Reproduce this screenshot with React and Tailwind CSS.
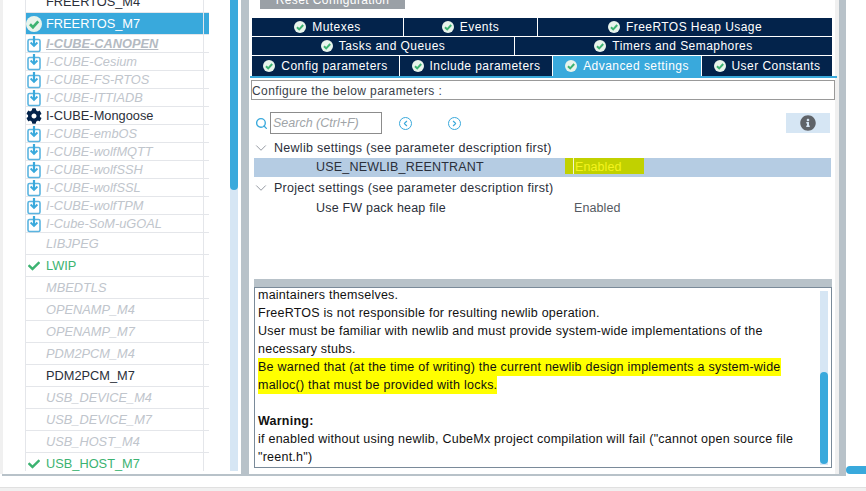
import React from 'react';
import { FaCheck, FaCog, FaInfoCircle } from 'react-icons/fa';
import { ChevronDown, ChevronLeft, ChevronRight, Search } from 'lucide-react';

const PACKS = [
  { name: 'FREERTOS_M4', h: 22, kind: 'plain' },
  { name: 'FREERTOS_M7', h: 22, kind: 'selected', icon: 'circle' },
  { name: 'I-CUBE-CANOPEN', h: 18, kind: 'strong', icon: 'download' },
  { name: 'I-CUBE-Cesium', h: 18, kind: 'off', icon: 'download' },
  { name: 'I-CUBE-FS-RTOS', h: 18, kind: 'off', icon: 'download' },
  { name: 'I-CUBE-ITTIADB', h: 18, kind: 'off', icon: 'download' },
  { name: 'I-CUBE-Mongoose', h: 18, kind: 'plain', icon: 'gear' },
  { name: 'I-CUBE-embOS', h: 18, kind: 'off', icon: 'download' },
  { name: 'I-CUBE-wolfMQTT', h: 18, kind: 'off', icon: 'download' },
  { name: 'I-CUBE-wolfSSH', h: 18, kind: 'off', icon: 'download' },
  { name: 'I-CUBE-wolfSSL', h: 18, kind: 'off', icon: 'download' },
  { name: 'I-CUBE-wolfTPM', h: 18, kind: 'off', icon: 'download' },
  { name: 'I-Cube-SoM-uGOAL', h: 18, kind: 'off', icon: 'download' },
  { name: 'LIBJPEG', h: 22, kind: 'off' },
  { name: 'LWIP', h: 22, kind: 'ok', icon: 'check' },
  { name: 'MBEDTLS', h: 22, kind: 'off' },
  { name: 'OPENAMP_M4', h: 22, kind: 'off' },
  { name: 'OPENAMP_M7', h: 22, kind: 'off' },
  { name: 'PDM2PCM_M4', h: 22, kind: 'off' },
  { name: 'PDM2PCM_M7', h: 22, kind: 'plain' },
  { name: 'USB_DEVICE_M4', h: 22, kind: 'off' },
  { name: 'USB_DEVICE_M7', h: 22, kind: 'off' },
  { name: 'USB_HOST_M4', h: 22, kind: 'off' },
  { name: 'USB_HOST_M7', h: 22, kind: 'ok', icon: 'check' },
];

const KIND_CLASS = {
  plain: 'text-[#2b2f3a]',
  selected: 'text-white bg-[#39a9dc]',
  strong: 'text-[#b4bac2] italic font-bold underline',
  off: 'text-[#c0c5cc] italic',
  ok: 'text-[#3cb371]',
};

const TAB_ROWS = [
  { h: 'h-[18px]', tabs: [['Mutexes', 'w-[151px]'], ['Events', 'w-[133px]'], ['FreeRTOS Heap Usage', 'flex-1']] },
  { h: 'h-[18px]', tabs: [['Tasks and Queues', 'w-[262px]'], ['Timers and Semaphores', 'flex-1']] },
  { h: 'h-[20px]', tabs: [['Config parameters', 'w-[147px]'], ['Include parameters', 'w-[152px]'], ['Advanced settings', 'w-[148px]', true], ['User Constants', 'flex-1']] },
];

const DownloadIcon = () => (
  <svg width="14" height="18" viewBox="0 0 14 18" fill="none">
    <rect x="1" y="4.5" width="12" height="12" rx="1.5" stroke="#5ab4e0" strokeWidth="1.6" />
    <path d="M7 1v9" stroke="#39a9dc" strokeWidth="2.2" />
    <path d="M3.6 7.5 7 11l3.4-3.5" stroke="#39a9dc" strokeWidth="1.8" />
  </svg>
);

const CheckCircle = ({ size = 12 }) => (
  <svg width={size} height={size} viewBox="0 0 12 12" className="shrink-0">
    <circle cx="6" cy="6" r="6" fill="#e8f4ec" />
    <path d="M3 6.2 5.2 8.4 9.2 4" fill="none" stroke="#3cb371" strokeWidth="2" />
  </svg>
);

const PackIcon = ({ icon }) => {
  if (icon === 'download') return <DownloadIcon />;
  if (icon === 'gear') return <FaCog className="-ml-px text-[16px] text-[#03234b]" />;
  if (icon === 'check') return <FaCheck className="ml-px text-[12px] text-[#3cb371]" />;
  if (icon === 'circle') return <span className="-ml-px"><CheckCircle size={16} /></span>;
  return null;
};

const Sidebar = () => (
  <div className="flex w-[241px] shrink-0 border-l-[3px] border-[#f0f0f0]">
    <div className="h-[471px] w-[206px] shrink-0 overflow-hidden pl-[22px]">
      <div className="-mt-[9px] border-l border-[#e4e6ea]">
        {PACKS.map((pack) => (
          <div
            key={pack.name}
            className={`flex items-center border-b border-[#e4e6ea] text-[12.8px] ${KIND_CLASS[pack.kind]}`}
            style={{ height: pack.h }}
          >
            <div className="flex h-full w-[178px] shrink-0 items-center border-r border-[#e4e6ea]">
              <span className="flex w-[20px] shrink-0 justify-start pl-px">
                <PackIcon icon={pack.icon} />
              </span>
              <span className="whitespace-nowrap pt-px">{pack.name}</span>
            </div>
          </div>
        ))}
      </div>
    </div>
    <div className="ml-[21px] mb-[3px] w-[8px] bg-[#d6e6f4]">
      <div className="h-[190px] rounded-b-[4px] bg-[#39a9dc]" />
    </div>
  </div>
);

const Tabs = () => (
  <div className="ml-[1px] -mr-[2px] mt-[18px] border-b-2 border-[#39a9dc]">
    <div className="ml-[2px] mr-[5px] flex flex-col gap-px">
      {TAB_ROWS.map((row, i) => (
        <div key={i} className={`flex gap-px ${row.h}`}>
          {row.tabs.map(([label, width, active]) => (
            <div
              key={label}
              className={`flex items-center justify-center gap-[6px] text-[12px] tracking-[0.45px] text-white ${width} ${active ? 'bg-[#39a9dc]' : 'bg-[#03234b]'}`}
            >
              <CheckCircle />
              <span className="whitespace-nowrap">{label}</span>
            </div>
          ))}
        </div>
      ))}
    </div>
  </div>
);

const SearchRow = () => (
  <div className="mt-[12px] flex h-[22px] items-center pl-[6px] pr-[5px]">
    <Search size={13} strokeWidth={2.5} className="text-[#39a9dc]" />
    <div className="ml-[2px] flex h-[22px] w-[112px] items-center border border-[#8c8c8c] pl-[2px] text-[12.5px] italic text-[#a0a4a8]">
      Search (Ctrl+F)
    </div>
    <span className="ml-[17px] flex h-[13px] w-[13px] items-center justify-center rounded-full border border-[#39a9dc] text-[#39a9dc]">
      <ChevronLeft size={9} strokeWidth={3} />
    </span>
    <span className="ml-[36px] flex h-[13px] w-[13px] items-center justify-center rounded-full border border-[#39a9dc] text-[#39a9dc]">
      <ChevronRight size={9} strokeWidth={3} />
    </span>
    <div className="ml-auto flex h-[20px] w-[44px] items-center justify-center bg-[#d6e6f4]">
      <FaInfoCircle className="text-[16px] text-[#5f6368]" />
    </div>
  </div>
);

const GroupRow = ({ label }) => (
  <div className="flex h-[22px] items-center text-[12.5px] text-[#2b2f3a]">
    <ChevronDown size={18} strokeWidth={1.2} className="-ml-[2px] shrink-0 text-[#8a9099]" />
    <span className="ml-[4px] whitespace-nowrap tracking-[0.28px]">{label}</span>
  </div>
);

const Tree = () => (
  <div className="mt-[3px] ml-[5px] mr-[4px] h-[142px]">
    <GroupRow label="Newlib settings (see parameter description first)" />
    <div className="-mt-[1px] flex h-[19px] items-center bg-[#b5cce3] text-[12.5px] text-[#2b2f3a]">
      <span className="w-[311px] shrink-0 pl-[62px] tracking-[0.2px]">USE_NEWLIB_REENTRANT</span>
      <span className="h-[16px] w-[79px] self-start bg-[#c1d100] pl-[8px] leading-[18px] tracking-[0.1px] text-[#f4f41e]">
        <span className="inline-block h-[16px] border-l border-[#f4f7d0] pl-px">Enabled</span>
      </span>
    </div>
    <GroupRow label="Project settings (see parameter description first)" />
    <div className="flex h-[18px] items-center text-[12.5px] text-[#2b2f3a]">
      <span className="w-[320px] shrink-0 pl-[62px] tracking-[0.2px]">Use FW pack heap file</span>
      <span className="tracking-[0.1px] text-[#555a62]">Enabled</span>
    </div>
  </div>
);

const Description = () => (
  <div className="ml-[5px] mr-[3px] border-t-[8px] border-[#b8c2c9]">
    <div className="flex h-[181px] overflow-hidden border border-[#7a8a99] pl-[3px] text-[12.5px] leading-[18px] tracking-[0.24px] text-[#111111]">
      <div className="-mt-[2px] min-w-0 flex-1 whitespace-nowrap">
        <div>maintainers themselves.</div>
        <div>FreeRTOS is not responsible for resulting newlib operation.</div>
        <div>User must be familiar with newlib and must provide system-wide implementations of the</div>
        <div>necessary stubs.</div>
        <div className="w-fit bg-[#ffff00]">Be warned that (at the time of writing) the current newlib design implements a system-wide</div>
        <div className="w-fit bg-[#ffff00]">malloc() that must be provided with locks.</div>
        <div className="h-[18px]" />
        <div className="font-bold">Warning:</div>
        <div>if enabled without using newlib, CubeMx project compilation will fail ("cannot open source file</div>
        <div>"reent.h")</div>
      </div>
      <div className="mr-[3px] mt-[3px] mb-[2px] w-[8px] shrink-0 bg-[#d6e6f4] pt-[81px]">
        <div className="h-[92px] rounded-[4px] bg-[#39a9dc]" />
      </div>
    </div>
  </div>
);

const Main = () => (
  <div className="relative flex w-[586px] shrink-0 flex-col">
    <div className="absolute left-[11px] top-0 flex h-[9px] w-[145px] items-end justify-center overflow-hidden bg-[#9aa0a6] text-[12px] leading-[18px] tracking-[0.4px] text-white">
      <span className="whitespace-nowrap">Reset Configuration</span>
    </div>
    <Tabs />
    <div className="ml-[2px] mt-[2px] flex h-[20px] items-center border border-[#999999] pt-px text-[12px] tracking-[0.4px] text-[#3a3f4a]">
      Configure the below parameters :
    </div>
    <SearchRow />
    <Tree />
    <Description />
  </div>
);

export default function App() {
  return (
    <div className="h-[491px] w-[866px] overflow-hidden bg-white font-['Liberation_Sans',Arial,sans-serif]">
      <div className="flex h-[474px]">
        <Sidebar />
        <div className="w-[8px] shrink-0 bg-[#b8c2c9]" />
        <Main />
        <div className="w-[4px] shrink-0 bg-[#f0f0f0]" />
        <div className="w-[7px] shrink-0 bg-[#b8c2c9]" />
        <div className="flex flex-1 flex-col justify-end">
          <div className="h-[8px] rounded-l-[4px] bg-[#39a9dc]" />
        </div>
      </div>
      <div className="ml-[2px] mr-[20px] h-[2px] bg-[#b8c2c9]" />
      <div className="mt-[11px] h-[4px] border-t border-[#e0e0e0] bg-[#f0f0f0]" />
    </div>
  );
}
